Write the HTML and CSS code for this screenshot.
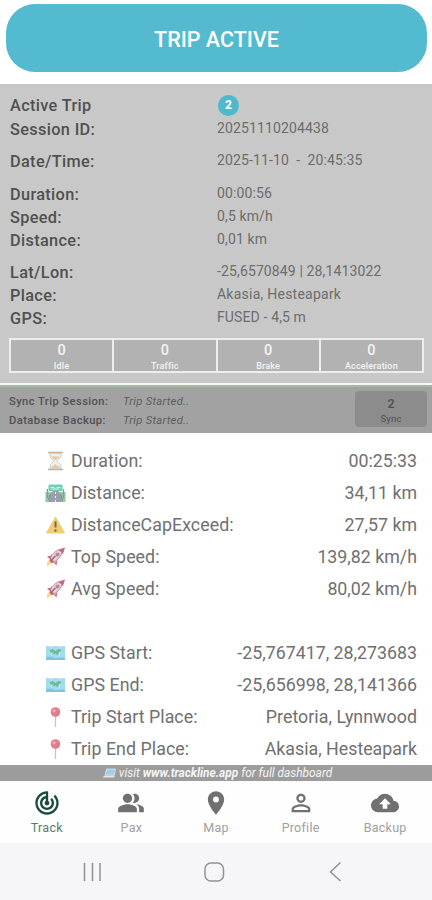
FILE: index.html
```html
<!DOCTYPE html>
<html lang="en">
<head>
<meta charset="utf-8">
<meta name="viewport" content="width=device-width, initial-scale=1">
<title>Trip tracker</title>
<link rel="stylesheet" href="styles.css">
</head>
<body>
<svg class="defs" aria-hidden="true">
  <symbol id="rocket" viewBox="0 0 20 20">
    <path d="M1 19.500l1-5 3-2 2 2-2 3z" fill="#f2df86"/>
    <path d="M7 8L1.500 9.500 4 12zM12 13l-1 5.500L8.500 16z" fill="#c87583"/>
    <path d="M4.500 13C6 7 10 3 17 2c0 6-4 11-10 13.500z" fill="#ded5dc" stroke="#ba7484" stroke-width=".8"/>
    <path d="M13 2.700L19.500.5l-2 6.500z" fill="#cf6478"/>
    <path d="M5 11l4 4-3 1-2-2z" fill="#c66376"/>
    <circle cx="12" cy="7.500" r="2" fill="#b78797"/>
    <path d="M6 13l4-4" stroke="#b5586c" stroke-width="1.500"/>
  </symbol>
  <symbol id="map" viewBox="0 0 20 20">
    <path d="M.5 3l5.500.5 4-.5 4 .5 5.500-.5v14l-5.500-.5-4 .5-4-.5-5.500.5z" fill="#a2dcec"/>
    <path d="M6 4v12M14 4v12" stroke="#c2edf5" stroke-width=".7"/>
    <path d="M4 7l3-1 3 2 3-2 3 .5-1 2-2 1-1 3-2-2-2 1-1-2-2 0z" fill="#72b99a"/>
    <path d="M.5 14.500l5-1 4 2 4-1 6 .5v2H.5z" fill="#79c4df"/>
  </symbol>
  <symbol id="pin" viewBox="0 0 20 20">
    <path d="M10 9v11" stroke="#c5c5c5" stroke-width="1.300"/>
    <circle cx="10" cy="5" r="4.800" fill="#e17f89"/>
    <circle cx="8.600" cy="3.800" r="1.500" fill="#f0b2b7"/>
  </symbol>
</svg>

<main class="screen">
  <header class="top"><button class="trip-button">TRIP ACTIVE</button></header>

  <section class="session">
    <dl class="facts">
      <div class="fact first"><dt>Active Trip</dt><dd><span class="count">2</span></dd></div>
      <div class="fact"><dt>Session ID:</dt><dd>20251110204438</dd></div>
      <div class="fact gap"><dt>Date/Time:</dt><dd>2025-11-10&nbsp; -&nbsp; 20:45:35</dd></div>
      <div class="fact gap plus"><dt>Duration:</dt><dd>00:00:56</dd></div>
      <div class="fact"><dt>Speed:</dt><dd>0,5 km/h</dd></div>
      <div class="fact"><dt>Distance:</dt><dd>0,01 km</dd></div>
      <div class="fact gap"><dt>Lat/Lon:</dt><dd>-25,6570849 | 28,1413022</dd></div>
      <div class="fact"><dt>Place:</dt><dd class="wide">Akasia, Hesteapark</dd></div>
      <div class="fact"><dt>GPS:</dt><dd>FUSED - 4,5 m</dd></div>
    </dl>
    <div class="events">
      <div class="event"><b>0</b><span>Idle</span></div>
      <div class="event"><b>0</b><span>Traffic</span></div>
      <div class="event"><b>0</b><span>Brake</span></div>
      <div class="event"><b>0</b><span>Acceleration</span></div>
    </div>
  </section>

  <section class="sync">
    <div class="sync-list">
      <div class="sync-row"><b>Sync Trip Session:</b><i>Trip Started..</i></div>
      <div class="sync-row"><b>Database Backup:</b><i>Trip Started..</i></div>
    </div>
    <button class="sync-button"><b>2</b><span>Sync</span></button>
  </section>

  <section class="summary">
    <div class="row"><svg class="emoji" viewBox="0 0 20 20"><path d="M4.500 2v3c0 3 4 3.500 4 5s-4 2-4 5v3h11v-3c0-3-4-3.500-4-5s4-2 4-5V2z" fill="#edf0f0" stroke="#c7c4bf" stroke-width=".8"/><path d="M6 5.500h8c-.5 2-3.500 2.500-4 4-.5-1.500-3.500-2-4-4zM5.500 17c.5-2 3-2 4.500-4 1.500 2 4 2 4.500 4z" fill="#e9c799"/><path d="M2.500 1.500h15M2.500 18.500h15" stroke="#d3ad90" stroke-width="1.600"/></svg><span class="name">Duration:</span><span class="value">00:25:33</span></div>
    <div class="row"><svg class="emoji" viewBox="0 0 20 20"><path d="M0 9h20v10H0z" fill="#93c9a0"/><path d="M7 8h6l4 11H3z" fill="#9b9eae"/><path d="M10 9v2m0 2v2m0 2v2" stroke="#ededed"/><path d="M2 6v9M18 6v9" stroke="#849b9c" stroke-width="1.300"/><rect x="3" y="1.500" width="14" height="6.500" rx="1" fill="#72ceb4"/><path d="M5 4.500h4m2 0h4M6 6h8" stroke="#d6f3e9"/><path d="M5 11l-2 6M15 11l2 6" stroke="#74868c"/></svg><span class="name">Distance:</span><span class="value">34,11 km</span></div>
    <div class="row"><svg class="emoji" viewBox="0 0 20 20"><path d="M10 2L19 18H1z" fill="#f1cc73" stroke="#f1cc73" stroke-linejoin="round"/><path d="M10 6.500v6" stroke="#746a51" stroke-width="2"/><circle cx="10" cy="15.500" r="1.200" fill="#746a51"/></svg><span class="name">DistanceCapExceed:</span><span class="value">27,57 km</span></div>
    <div class="row"><svg class="emoji"><use href="#rocket"/></svg><span class="name">Top Speed:</span><span class="value">139,82 km/h</span></div>
    <div class="row"><svg class="emoji"><use href="#rocket"/></svg><span class="name">Avg Speed:</span><span class="value">80,02 km/h</span></div>
    <div class="row after-gap"><svg class="emoji"><use href="#map"/></svg><span class="name">GPS Start:</span><span class="value">-25,767417, 28,273683</span></div>
    <div class="row"><svg class="emoji"><use href="#map"/></svg><span class="name">GPS End:</span><span class="value">-25,656998, 28,141366</span></div>
    <div class="row"><svg class="emoji"><use href="#pin"/></svg><span class="name">Trip Start Place:</span><span class="value place">Pretoria, Lynnwood</span></div>
    <div class="row"><svg class="emoji"><use href="#pin"/></svg><span class="name">Trip End Place:</span><span class="value">Akasia, Hesteapark</span></div>
  </section>

  <div class="promo"><svg class="laptop" viewBox="0 0 14 11"><path d="M4 1h9l-1 6H2.500z" fill="#9fcdea" stroke="#e3edf2" stroke-width=".7"/><path d="M2 7.500h10.500l-1 2H0z" fill="#e2e5e8"/></svg><span>visit <b>www.trackline.app</b> for full dashboard</span></div>

  <nav class="tabs">
    <a class="tab active"><svg class="icon" viewBox="0 0 24 24"><path d="M19.070 4.930l-1.410 1.410C19.100 7.790 20 9.790 20 12c0 4.420-3.580 8-8 8s-8-3.580-8-8c0-4.080 3.050-7.440 7-7.930v2.020C8.160 6.570 6 9.030 6 12c0 3.310 2.690 6 6 6s6-2.690 6-6c0-1.660-.67-3.160-1.760-4.240l-1.410 1.410C15.550 9.900 16 10.900 16 12c0 2.210-1.790 4-4 4s-4-1.790-4-4c0-1.860 1.280-3.410 3-3.860v2.140c-.6.350-1 .98-1 1.720 0 1.100.9 2 2 2s2-.9 2-2c0-.74-.4-1.380-1-1.720V2h-1C6.480 2 2 6.480 2 12s4.480 10 10 10 10-4.480 10-10c0-2.760-1.120-5.260-2.930-7.070z"/></svg><span>Track</span></a>
    <a class="tab"><svg class="icon" viewBox="0 0 24 24"><path d="M16.670 13.130C18.040 14.060 19 15.320 19 17v3h4v-3c0-2.180-3.570-3.470-6.330-3.870zM15 12c2.210 0 4-1.790 4-4s-1.790-4-4-4c-.47 0-.91.100-1.330.24C14.500 5.270 15 6.580 15 8s-.5 2.730-1.330 3.760c.42.140.86.240 1.330.24zM9 12c2.210 0 4-1.790 4-4s-1.790-4-4-4-4 1.790-4 4 1.790 4 4 4zm0 1c-2.670 0-8 1.340-8 4v3h16v-3c0-2.660-5.330-4-8-4z"/></svg><span>Pax</span></a>
    <a class="tab"><svg class="icon" viewBox="0 0 24 24"><path d="M12 2C8.130 2 5 5.130 5 9c0 5.250 7 13 7 13s7-7.750 7-13c0-3.870-3.130-7-7-7zm0 9.500a2.500 2.500 0 1 1 0-5 2.500 2.500 0 0 1 0 5z"/></svg><span>Map</span></a>
    <a class="tab"><svg class="icon" viewBox="0 0 24 24"><path d="M12 5.900a2.100 2.100 0 1 1 0 4.200 2.100 2.100 0 0 1 0-4.200m0 9c2.970 0 6.100 1.460 6.100 2.100v1.100H5.900V17c0-.64 3.130-2.100 6.100-2.100M12 4C9.790 4 8 5.790 8 8s1.790 4 4 4 4-1.790 4-4-1.790-4-4-4zm0 9c-2.670 0-8 1.340-8 4v3h16v-3c0-2.660-5.330-4-8-4z"/></svg><span>Profile</span></a>
    <a class="tab"><svg class="icon" viewBox="0 0 24 24"><path d="M19.350 10.040C18.670 6.590 15.640 4 12 4 9.110 4 6.600 5.640 5.350 8.040 2.340 8.360 0 10.910 0 14c0 3.310 2.690 6 6 6h13c2.760 0 5-2.240 5-5 0-2.640-2.050-4.780-4.650-4.960zM14 13v4h-4v-4H7l5-5 5 5h-3z"/></svg><span>Backup</span></a>
  </nav>

  <footer class="system">
    <svg class="sys" viewBox="0 0 24 24"><path d="M3.500 3v18M11.500 3v18M19 3v18"/></svg>
    <svg class="sys" viewBox="0 0 24 24"><rect x="3" y="3" width="18.500" height="18" rx="6"/></svg>
    <svg class="sys" viewBox="0 0 24 24"><path d="M17.500 2.500L7.500 12l10 9"/></svg>
  </footer>
</main>
</body>
</html>
```
FILE: styles.css
```css
* { box-sizing: border-box; }
body { margin: 0; background: #fff; font-family: Roboto, "Liberation Sans", sans-serif; }
button { border: 0; font-family: inherit; padding: 0; }
.defs { display: none; }
.screen { display: flex; flex-direction: column; width: 432px; height: 900px; overflow: hidden; }

.top { height: 84px; padding: 4px 5px 0 6px; }
.trip-button { display: block; width: 100%; height: 68px; border-radius: 29px; background: #54bacf; color: #fff; font-size: 21.500px; font-weight: 500; line-height: 71px; }

.session { height: 299px; background: #c8c8c8; padding: 10px 8px 0 9px; }
.facts { margin: 0 0 0 1px; height: 244px; }
.fact { display: grid; grid-template-columns: 207px 1fr; height: 23px; line-height: 23px; }
.fact.first { height: 24px; }
.fact.gap { margin-top: 9px; }
.fact.gap.plus { margin-top: 10px; }
.fact dt { color: #505050; font-size: 16.300px; font-weight: 500; letter-spacing: .35px; }
.fact dd { margin: -1px 0 0; color: #6c6c6c; font-size: 14px; letter-spacing: .13px; white-space: nowrap; }
.fact .wide { letter-spacing: .24px; }
.count { display: block; width: 21px; height: 21px; margin: 2px 0 0 1px; border-radius: 50%; background: #4eb9cd; color: #fff; font-size: 12px; font-weight: 700; line-height: 21px; text-align: center; }

.events { display: grid; grid-template-columns: repeat(4, 1fr); grid-template-rows: 31px; gap: 2px; height: 35px; padding: 2px; background: #ededed; }
.event { display: flex; flex-direction: column; align-items: center; background: #b2b2b2; color: #f4f4f4; }
.event b { height: 19px; font-size: 14.500px; font-weight: 500; line-height: 21px; }
.event span { height: 12px; font-size: 9px; font-weight: 500; line-height: 15px; letter-spacing: .2px; }

.sync { display: flex; justify-content: space-between; height: 50px; padding: 5px 5px 0 9px; border-top: 2px solid #f4f8f2; background: #a2a2a2; box-shadow: inset 0 2px #9fbd9b; }
.sync-list { padding-top: 2px; }
.sync-row { display: grid; grid-template-columns: 114px 1fr; height: 19px; line-height: 19px; font-size: 11.200px; color: #505050; white-space: nowrap; }
.sync-row b { font-weight: 500; letter-spacing: .42px; }
.sync-row i { letter-spacing: .3px; color: #5c5c5c; }
.sync-button { display: flex; flex-direction: column; align-items: center; width: 72px; height: 36px; margin-top: 1px; border-radius: 4px; background: #8c8c8c; color: #505050; }
.sync-button b { height: 19px; font-size: 12.500px; font-weight: 500; line-height: 25px; }
.sync-button span { font-size: 9.500px; line-height: 17px; letter-spacing: .2px; }

.summary { height: 332px; padding: 12px 15px 0 45px; }
.row { display: flex; align-items: center; height: 32px; color: #707070; font-size: 17.800px; line-height: 20px; white-space: nowrap; }
.row.after-gap { margin-top: 32px; }
.emoji { width: 21px; height: 20px; margin-right: 5px; }
.name { letter-spacing: .05px; }
.value { margin-left: auto; }
.value.place { letter-spacing: .05px; }

.promo { display: flex; align-items: center; justify-content: center; gap: 2px; height: 16px; padding-left: 2px; background: #9c9c9c; color: #f4f4f4; font-size: 11.900px; font-style: italic; line-height: 17px; }
.laptop { width: 15px; height: 11px; }

.tabs { display: grid; grid-template-columns: repeat(5, 84.600px); justify-content: center; height: 62px; padding: 9px 0 0; background: #fefefe; }
.tab { display: flex; flex-direction: column; align-items: center; color: #a0a0a0; font-size: 12.500px; }
.tab span { line-height: 18px; margin-top: 1px; letter-spacing: .25px; }
.icon { width: 28px; height: 28px; margin-top: -1px; margin-bottom: 1px; fill: #707070; }
.active { color: #527f6d; }
.active .icon { fill: #174d3b; }

.system { flex: 1; display: grid; grid-template-columns: repeat(3, 121px); justify-content: center; justify-items: center; align-items: center; padding-right: 4px; background: #f6f6f8; }
.sys { width: 24px; height: 24px; fill: none; stroke: #929292; stroke-width: 1.500; }
```
